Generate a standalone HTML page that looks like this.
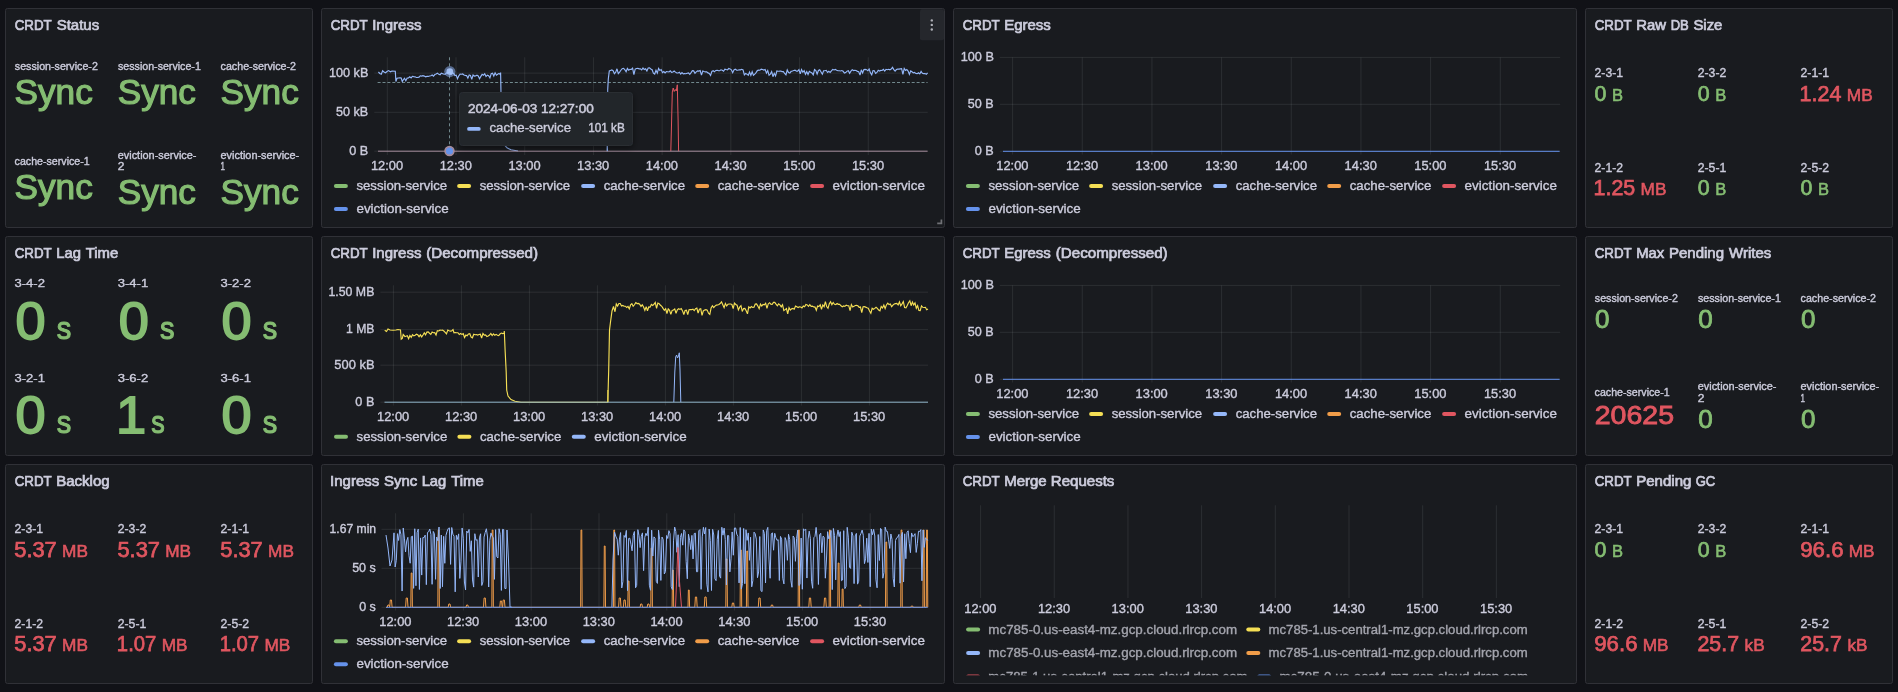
<!DOCTYPE html>
<html><head><meta charset="utf-8"><title>CRDT Dashboard</title>
<style>html,body{margin:0;padding:0;background:#111217;width:1898px;height:692px;overflow:hidden}
svg text{font-family:"Liberation Sans",sans-serif}</style></head>
<body>
<svg width="1898" height="692" viewBox="0 0 1898 692" style="display:block;will-change:transform">
<defs><filter id="sh" x="-20%" y="-20%" width="140%" height="150%"><feDropShadow dx="0" dy="2" stdDeviation="3" flood-color="#000" flood-opacity="0.5"/></filter></defs>
<rect width="1898" height="692" fill="#111217"/>
<rect x="5.5" y="8.5" width="307" height="219" rx="2" fill="#191b1f" stroke="#303137" stroke-width="1"/>
<rect x="321.5" y="8.5" width="623" height="219" rx="2" fill="#191b1f" stroke="#303137" stroke-width="1"/>
<rect x="953.5" y="8.5" width="623" height="219" rx="2" fill="#191b1f" stroke="#303137" stroke-width="1"/>
<rect x="1585.5" y="8.5" width="307" height="219" rx="2" fill="#191b1f" stroke="#303137" stroke-width="1"/>
<rect x="5.5" y="236.5" width="307" height="219" rx="2" fill="#191b1f" stroke="#303137" stroke-width="1"/>
<rect x="321.5" y="236.5" width="623" height="219" rx="2" fill="#191b1f" stroke="#303137" stroke-width="1"/>
<rect x="953.5" y="236.5" width="623" height="219" rx="2" fill="#191b1f" stroke="#303137" stroke-width="1"/>
<rect x="1585.5" y="236.5" width="307" height="219" rx="2" fill="#191b1f" stroke="#303137" stroke-width="1"/>
<rect x="5.5" y="464.5" width="307" height="219" rx="2" fill="#191b1f" stroke="#303137" stroke-width="1"/>
<rect x="321.5" y="464.5" width="623" height="219" rx="2" fill="#191b1f" stroke="#303137" stroke-width="1"/>
<rect x="953.5" y="464.5" width="623" height="219" rx="2" fill="#191b1f" stroke="#303137" stroke-width="1"/>
<rect x="1585.5" y="464.5" width="307" height="219" rx="2" fill="#191b1f" stroke="#303137" stroke-width="1"/>
<g font-family="Liberation Sans, sans-serif">
<text x="14.70" y="29.70" font-size="14.3" fill="#ccccdc" textLength="37.00" lengthAdjust="spacingAndGlyphs" stroke="#ccccdc" stroke-width="0.70">CRDT</text>
<text x="56.73" y="29.70" font-size="14.3" fill="#ccccdc" textLength="42.45" lengthAdjust="spacingAndGlyphs" stroke="#ccccdc" stroke-width="0.70">Status</text>
<text x="330.70" y="29.70" font-size="14.3" fill="#ccccdc" textLength="37.00" lengthAdjust="spacingAndGlyphs" stroke="#ccccdc" stroke-width="0.70">CRDT</text>
<text x="372.20" y="29.70" font-size="14.3" fill="#ccccdc" textLength="49.21" lengthAdjust="spacingAndGlyphs" stroke="#ccccdc" stroke-width="0.70">Ingress</text>
<text x="962.70" y="29.70" font-size="14.3" fill="#ccccdc" textLength="37.00" lengthAdjust="spacingAndGlyphs" stroke="#ccccdc" stroke-width="0.70">CRDT</text>
<text x="1004.20" y="29.70" font-size="14.3" fill="#ccccdc" textLength="46.67" lengthAdjust="spacingAndGlyphs" stroke="#ccccdc" stroke-width="0.70">Egress</text>
<text x="1594.70" y="29.70" font-size="14.3" fill="#ccccdc" textLength="37.00" lengthAdjust="spacingAndGlyphs" stroke="#ccccdc" stroke-width="0.70">CRDT</text>
<text x="1636.22" y="29.70" font-size="14.3" fill="#ccccdc" textLength="29.73" lengthAdjust="spacingAndGlyphs" stroke="#ccccdc" stroke-width="0.70">Raw</text>
<text x="1670.69" y="29.70" font-size="14.3" fill="#ccccdc" textLength="18.09" lengthAdjust="spacingAndGlyphs" stroke="#ccccdc" stroke-width="0.70">DB</text>
<text x="1693.46" y="29.70" font-size="14.3" fill="#ccccdc" textLength="28.89" lengthAdjust="spacingAndGlyphs" stroke="#ccccdc" stroke-width="0.70">Size</text>
<text x="14.70" y="257.70" font-size="14.3" fill="#ccccdc" textLength="37.00" lengthAdjust="spacingAndGlyphs" stroke="#ccccdc" stroke-width="0.70">CRDT</text>
<text x="56.22" y="257.70" font-size="14.3" fill="#ccccdc" textLength="24.64" lengthAdjust="spacingAndGlyphs" stroke="#ccccdc" stroke-width="0.70">Lag</text>
<text x="85.72" y="257.70" font-size="14.3" fill="#ccccdc" textLength="32.55" lengthAdjust="spacingAndGlyphs" stroke="#ccccdc" stroke-width="0.70">Time</text>
<text x="330.70" y="257.70" font-size="14.3" fill="#ccccdc" textLength="37.00" lengthAdjust="spacingAndGlyphs" stroke="#ccccdc" stroke-width="0.70">CRDT</text>
<text x="372.20" y="257.70" font-size="14.3" fill="#ccccdc" textLength="49.21" lengthAdjust="spacingAndGlyphs" stroke="#ccccdc" stroke-width="0.70">Ingress</text>
<text x="426.21" y="257.70" font-size="14.3" fill="#ccccdc" textLength="111.84" lengthAdjust="spacingAndGlyphs" stroke="#ccccdc" stroke-width="0.70">(Decompressed)</text>
<text x="962.70" y="257.70" font-size="14.3" fill="#ccccdc" textLength="37.00" lengthAdjust="spacingAndGlyphs" stroke="#ccccdc" stroke-width="0.70">CRDT</text>
<text x="1004.20" y="257.70" font-size="14.3" fill="#ccccdc" textLength="46.67" lengthAdjust="spacingAndGlyphs" stroke="#ccccdc" stroke-width="0.70">Egress</text>
<text x="1055.82" y="257.70" font-size="14.3" fill="#ccccdc" textLength="111.84" lengthAdjust="spacingAndGlyphs" stroke="#ccccdc" stroke-width="0.70">(Decompressed)</text>
<text x="1594.70" y="257.70" font-size="14.3" fill="#ccccdc" textLength="37.00" lengthAdjust="spacingAndGlyphs" stroke="#ccccdc" stroke-width="0.70">CRDT</text>
<text x="1636.22" y="257.70" font-size="14.3" fill="#ccccdc" textLength="28.03" lengthAdjust="spacingAndGlyphs" stroke="#ccccdc" stroke-width="0.70">Max</text>
<text x="1668.92" y="257.70" font-size="14.3" fill="#ccccdc" textLength="55.16" lengthAdjust="spacingAndGlyphs" stroke="#ccccdc" stroke-width="0.70">Pending</text>
<text x="1729.05" y="257.70" font-size="14.3" fill="#ccccdc" textLength="42.16" lengthAdjust="spacingAndGlyphs" stroke="#ccccdc" stroke-width="0.70">Writes</text>
<text x="14.70" y="485.70" font-size="14.3" fill="#ccccdc" textLength="37.00" lengthAdjust="spacingAndGlyphs" stroke="#ccccdc" stroke-width="0.70">CRDT</text>
<text x="56.20" y="485.70" font-size="14.3" fill="#ccccdc" textLength="53.44" lengthAdjust="spacingAndGlyphs" stroke="#ccccdc" stroke-width="0.70">Backlog</text>
<text x="330.09" y="485.70" font-size="14.3" fill="#ccccdc" textLength="49.21" lengthAdjust="spacingAndGlyphs" stroke="#ccccdc" stroke-width="0.70">Ingress</text>
<text x="384.11" y="485.70" font-size="14.3" fill="#ccccdc" textLength="33.13" lengthAdjust="spacingAndGlyphs" stroke="#ccccdc" stroke-width="0.70">Sync</text>
<text x="421.65" y="485.70" font-size="14.3" fill="#ccccdc" textLength="24.64" lengthAdjust="spacingAndGlyphs" stroke="#ccccdc" stroke-width="0.70">Lag</text>
<text x="451.15" y="485.70" font-size="14.3" fill="#ccccdc" textLength="32.55" lengthAdjust="spacingAndGlyphs" stroke="#ccccdc" stroke-width="0.70">Time</text>
<text x="962.70" y="485.70" font-size="14.3" fill="#ccccdc" textLength="37.00" lengthAdjust="spacingAndGlyphs" stroke="#ccccdc" stroke-width="0.70">CRDT</text>
<text x="1004.21" y="485.70" font-size="14.3" fill="#ccccdc" textLength="42.43" lengthAdjust="spacingAndGlyphs" stroke="#ccccdc" stroke-width="0.70">Merge</text>
<text x="1050.77" y="485.70" font-size="14.3" fill="#ccccdc" textLength="63.61" lengthAdjust="spacingAndGlyphs" stroke="#ccccdc" stroke-width="0.70">Requests</text>
<text x="1594.70" y="485.70" font-size="14.3" fill="#ccccdc" textLength="37.00" lengthAdjust="spacingAndGlyphs" stroke="#ccccdc" stroke-width="0.70">CRDT</text>
<text x="1636.20" y="485.70" font-size="14.3" fill="#ccccdc" textLength="55.16" lengthAdjust="spacingAndGlyphs" stroke="#ccccdc" stroke-width="0.70">Pending</text>
<text x="1695.64" y="485.70" font-size="14.3" fill="#ccccdc" textLength="19.63" lengthAdjust="spacingAndGlyphs" stroke="#ccccdc" stroke-width="0.70">GC</text>
<text x="14.83" y="70.00" font-size="10.5" fill="#ccccdc" textLength="83.00" lengthAdjust="spacingAndGlyphs" stroke="#ccccdc" stroke-width="0.36">session-service-2</text>
<text x="14.54" y="104.00" font-size="35" fill="#85bd72" textLength="78.23" lengthAdjust="spacingAndGlyphs" stroke="#85bd72" stroke-width="1.19">Sync</text>
<text x="118.03" y="70.00" font-size="10.5" fill="#ccccdc" textLength="82.79" lengthAdjust="spacingAndGlyphs" stroke="#ccccdc" stroke-width="0.36">session-service-1</text>
<text x="117.74" y="104.00" font-size="35" fill="#85bd72" textLength="78.23" lengthAdjust="spacingAndGlyphs" stroke="#85bd72" stroke-width="1.19">Sync</text>
<text x="220.57" y="70.00" font-size="10.5" fill="#ccccdc" textLength="75.47" lengthAdjust="spacingAndGlyphs" stroke="#ccccdc" stroke-width="0.36">cache-service-2</text>
<text x="220.54" y="104.00" font-size="35" fill="#85bd72" textLength="78.23" lengthAdjust="spacingAndGlyphs" stroke="#85bd72" stroke-width="1.19">Sync</text>
<text x="14.57" y="165.00" font-size="10.5" fill="#ccccdc" textLength="75.17" lengthAdjust="spacingAndGlyphs" stroke="#ccccdc" stroke-width="0.36">cache-service-1</text>
<text x="14.54" y="198.60" font-size="35" fill="#85bd72" textLength="78.23" lengthAdjust="spacingAndGlyphs" stroke="#85bd72" stroke-width="1.19">Sync</text>
<text x="117.76" y="158.90" font-size="10.5" fill="#ccccdc" textLength="78.68" lengthAdjust="spacingAndGlyphs" stroke="#ccccdc" stroke-width="0.36">eviction-service-</text>
<text x="117.71" y="169.90" font-size="10.5" fill="#ccccdc" textLength="6.69" lengthAdjust="spacingAndGlyphs" stroke="#ccccdc" stroke-width="0.36">2</text>
<text x="117.74" y="204.30" font-size="35" fill="#85bd72" textLength="78.23" lengthAdjust="spacingAndGlyphs" stroke="#85bd72" stroke-width="1.19">Sync</text>
<text x="220.56" y="158.90" font-size="10.5" fill="#ccccdc" textLength="78.68" lengthAdjust="spacingAndGlyphs" stroke="#ccccdc" stroke-width="0.36">eviction-service-</text>
<text x="220.51" y="169.90" font-size="10.5" fill="#ccccdc" textLength="4.46" lengthAdjust="spacingAndGlyphs" stroke="#ccccdc" stroke-width="0.36">1</text>
<text x="220.54" y="204.30" font-size="35" fill="#85bd72" textLength="78.23" lengthAdjust="spacingAndGlyphs" stroke="#85bd72" stroke-width="1.19">Sync</text>
<text x="14.51" y="287.10" font-size="11.5" fill="#ccccdc" textLength="30.49" lengthAdjust="spacingAndGlyphs" stroke="#ccccdc" stroke-width="0.36">3-4-2</text>
<text x="15.53" y="338.60" font-size="52.5" fill="#85bd72" textLength="30.08" lengthAdjust="spacingAndGlyphs" stroke="#85bd72" stroke-width="1.79">0</text>
<text x="56.79" y="338.60" font-size="31" fill="#85bd72" textLength="14.52" lengthAdjust="spacingAndGlyphs" stroke="#85bd72" stroke-width="1.05">s</text>
<text x="117.71" y="287.10" font-size="11.5" fill="#ccccdc" textLength="30.49" lengthAdjust="spacingAndGlyphs" stroke="#ccccdc" stroke-width="0.36">3-4-1</text>
<text x="118.73" y="338.60" font-size="52.5" fill="#85bd72" textLength="30.08" lengthAdjust="spacingAndGlyphs" stroke="#85bd72" stroke-width="1.79">0</text>
<text x="159.99" y="338.60" font-size="31" fill="#85bd72" textLength="14.52" lengthAdjust="spacingAndGlyphs" stroke="#85bd72" stroke-width="1.05">s</text>
<text x="220.51" y="287.10" font-size="11.5" fill="#ccccdc" textLength="30.49" lengthAdjust="spacingAndGlyphs" stroke="#ccccdc" stroke-width="0.36">3-2-2</text>
<text x="221.53" y="338.60" font-size="52.5" fill="#85bd72" textLength="30.08" lengthAdjust="spacingAndGlyphs" stroke="#85bd72" stroke-width="1.79">0</text>
<text x="262.79" y="338.60" font-size="31" fill="#85bd72" textLength="14.52" lengthAdjust="spacingAndGlyphs" stroke="#85bd72" stroke-width="1.05">s</text>
<text x="14.51" y="381.60" font-size="11.5" fill="#ccccdc" textLength="30.49" lengthAdjust="spacingAndGlyphs" stroke="#ccccdc" stroke-width="0.36">3-2-1</text>
<text x="15.53" y="432.80" font-size="52.5" fill="#85bd72" textLength="30.08" lengthAdjust="spacingAndGlyphs" stroke="#85bd72" stroke-width="1.79">0</text>
<text x="56.79" y="432.80" font-size="31" fill="#85bd72" textLength="14.52" lengthAdjust="spacingAndGlyphs" stroke="#85bd72" stroke-width="1.05">s</text>
<text x="117.71" y="381.60" font-size="11.5" fill="#ccccdc" textLength="30.49" lengthAdjust="spacingAndGlyphs" stroke="#ccccdc" stroke-width="0.36">3-6-2</text>
<text x="115.96" y="432.80" font-size="52.5" fill="#85bd72" textLength="30.18" lengthAdjust="spacingAndGlyphs" stroke="#85bd72" stroke-width="1.79">1</text>
<text x="151.16" y="432.80" font-size="31" fill="#85bd72" textLength="13.49" lengthAdjust="spacingAndGlyphs" stroke="#85bd72" stroke-width="1.05">s</text>
<text x="220.51" y="381.60" font-size="11.5" fill="#ccccdc" textLength="30.49" lengthAdjust="spacingAndGlyphs" stroke="#ccccdc" stroke-width="0.36">3-6-1</text>
<text x="221.53" y="432.80" font-size="52.5" fill="#85bd72" textLength="30.08" lengthAdjust="spacingAndGlyphs" stroke="#85bd72" stroke-width="1.79">0</text>
<text x="262.79" y="432.80" font-size="31" fill="#85bd72" textLength="14.52" lengthAdjust="spacingAndGlyphs" stroke="#85bd72" stroke-width="1.05">s</text>
<text x="1594.57" y="76.90" font-size="12" fill="#ccccdc" textLength="28.48" lengthAdjust="spacingAndGlyphs" stroke="#ccccdc" stroke-width="0.36">2-3-1</text>
<text x="1594.54" y="100.60" font-size="22" fill="#85bd72" textLength="11.90" lengthAdjust="spacingAndGlyphs" stroke="#85bd72" stroke-width="0.75">0</text>
<text x="1612.11" y="100.60" font-size="17.3" fill="#85bd72" textLength="11.04" lengthAdjust="spacingAndGlyphs" stroke="#85bd72" stroke-width="0.59">B</text>
<text x="1697.77" y="76.90" font-size="12" fill="#ccccdc" textLength="28.48" lengthAdjust="spacingAndGlyphs" stroke="#ccccdc" stroke-width="0.36">2-3-2</text>
<text x="1697.74" y="100.60" font-size="22" fill="#85bd72" textLength="11.90" lengthAdjust="spacingAndGlyphs" stroke="#85bd72" stroke-width="0.75">0</text>
<text x="1715.31" y="100.60" font-size="17.3" fill="#85bd72" textLength="11.04" lengthAdjust="spacingAndGlyphs" stroke="#85bd72" stroke-width="0.59">B</text>
<text x="1800.57" y="76.90" font-size="12" fill="#ccccdc" textLength="28.48" lengthAdjust="spacingAndGlyphs" stroke="#ccccdc" stroke-width="0.36">2-1-1</text>
<text x="1799.57" y="100.60" font-size="22" fill="#e05660" textLength="41.75" lengthAdjust="spacingAndGlyphs" stroke="#e05660" stroke-width="0.75">1.24</text>
<text x="1846.85" y="100.60" font-size="17.3" fill="#e05660" textLength="25.85" lengthAdjust="spacingAndGlyphs" stroke="#e05660" stroke-width="0.59">MB</text>
<text x="1594.57" y="172.00" font-size="12" fill="#ccccdc" textLength="28.48" lengthAdjust="spacingAndGlyphs" stroke="#ccccdc" stroke-width="0.36">2-1-2</text>
<text x="1593.57" y="194.90" font-size="22" fill="#e05660" textLength="41.69" lengthAdjust="spacingAndGlyphs" stroke="#e05660" stroke-width="0.75">1.25</text>
<text x="1640.55" y="194.90" font-size="17.3" fill="#e05660" textLength="25.85" lengthAdjust="spacingAndGlyphs" stroke="#e05660" stroke-width="0.59">MB</text>
<text x="1697.77" y="172.00" font-size="12" fill="#ccccdc" textLength="28.48" lengthAdjust="spacingAndGlyphs" stroke="#ccccdc" stroke-width="0.36">2-5-1</text>
<text x="1697.74" y="194.90" font-size="22" fill="#85bd72" textLength="11.90" lengthAdjust="spacingAndGlyphs" stroke="#85bd72" stroke-width="0.75">0</text>
<text x="1715.31" y="194.90" font-size="17.3" fill="#85bd72" textLength="11.04" lengthAdjust="spacingAndGlyphs" stroke="#85bd72" stroke-width="0.59">B</text>
<text x="1800.57" y="172.00" font-size="12" fill="#ccccdc" textLength="28.48" lengthAdjust="spacingAndGlyphs" stroke="#ccccdc" stroke-width="0.36">2-5-2</text>
<text x="1800.54" y="194.90" font-size="22" fill="#85bd72" textLength="11.90" lengthAdjust="spacingAndGlyphs" stroke="#85bd72" stroke-width="0.75">0</text>
<text x="1818.11" y="194.90" font-size="17.3" fill="#85bd72" textLength="11.04" lengthAdjust="spacingAndGlyphs" stroke="#85bd72" stroke-width="0.59">B</text>
<text x="14.57" y="532.90" font-size="12" fill="#ccccdc" textLength="28.48" lengthAdjust="spacingAndGlyphs" stroke="#ccccdc" stroke-width="0.36">2-3-1</text>
<text x="14.28" y="556.60" font-size="22" fill="#e05660" textLength="42.50" lengthAdjust="spacingAndGlyphs" stroke="#e05660" stroke-width="0.75">5.37</text>
<text x="62.05" y="556.60" font-size="17.3" fill="#e05660" textLength="25.85" lengthAdjust="spacingAndGlyphs" stroke="#e05660" stroke-width="0.59">MB</text>
<text x="117.77" y="532.90" font-size="12" fill="#ccccdc" textLength="28.48" lengthAdjust="spacingAndGlyphs" stroke="#ccccdc" stroke-width="0.36">2-3-2</text>
<text x="117.48" y="556.60" font-size="22" fill="#e05660" textLength="42.50" lengthAdjust="spacingAndGlyphs" stroke="#e05660" stroke-width="0.75">5.37</text>
<text x="165.25" y="556.60" font-size="17.3" fill="#e05660" textLength="25.85" lengthAdjust="spacingAndGlyphs" stroke="#e05660" stroke-width="0.59">MB</text>
<text x="220.57" y="532.90" font-size="12" fill="#ccccdc" textLength="28.48" lengthAdjust="spacingAndGlyphs" stroke="#ccccdc" stroke-width="0.36">2-1-1</text>
<text x="220.28" y="556.60" font-size="22" fill="#e05660" textLength="42.50" lengthAdjust="spacingAndGlyphs" stroke="#e05660" stroke-width="0.75">5.37</text>
<text x="268.05" y="556.60" font-size="17.3" fill="#e05660" textLength="25.85" lengthAdjust="spacingAndGlyphs" stroke="#e05660" stroke-width="0.59">MB</text>
<text x="14.57" y="628.00" font-size="12" fill="#ccccdc" textLength="28.48" lengthAdjust="spacingAndGlyphs" stroke="#ccccdc" stroke-width="0.36">2-1-2</text>
<text x="14.28" y="650.90" font-size="22" fill="#e05660" textLength="42.50" lengthAdjust="spacingAndGlyphs" stroke="#e05660" stroke-width="0.75">5.37</text>
<text x="62.05" y="650.90" font-size="17.3" fill="#e05660" textLength="25.85" lengthAdjust="spacingAndGlyphs" stroke="#e05660" stroke-width="0.59">MB</text>
<text x="117.77" y="628.00" font-size="12" fill="#ccccdc" textLength="28.48" lengthAdjust="spacingAndGlyphs" stroke="#ccccdc" stroke-width="0.36">2-5-1</text>
<text x="116.86" y="650.90" font-size="22" fill="#e05660" textLength="39.45" lengthAdjust="spacingAndGlyphs" stroke="#e05660" stroke-width="0.75">1.07</text>
<text x="161.65" y="650.90" font-size="17.3" fill="#e05660" textLength="25.85" lengthAdjust="spacingAndGlyphs" stroke="#e05660" stroke-width="0.59">MB</text>
<text x="220.57" y="628.00" font-size="12" fill="#ccccdc" textLength="28.48" lengthAdjust="spacingAndGlyphs" stroke="#ccccdc" stroke-width="0.36">2-5-2</text>
<text x="219.66" y="650.90" font-size="22" fill="#e05660" textLength="39.45" lengthAdjust="spacingAndGlyphs" stroke="#e05660" stroke-width="0.75">1.07</text>
<text x="264.45" y="650.90" font-size="17.3" fill="#e05660" textLength="25.85" lengthAdjust="spacingAndGlyphs" stroke="#e05660" stroke-width="0.59">MB</text>
<text x="1594.57" y="532.90" font-size="12" fill="#ccccdc" textLength="28.48" lengthAdjust="spacingAndGlyphs" stroke="#ccccdc" stroke-width="0.36">2-3-1</text>
<text x="1594.54" y="556.60" font-size="22" fill="#85bd72" textLength="11.90" lengthAdjust="spacingAndGlyphs" stroke="#85bd72" stroke-width="0.75">0</text>
<text x="1612.11" y="556.60" font-size="17.3" fill="#85bd72" textLength="11.04" lengthAdjust="spacingAndGlyphs" stroke="#85bd72" stroke-width="0.59">B</text>
<text x="1697.77" y="532.90" font-size="12" fill="#ccccdc" textLength="28.48" lengthAdjust="spacingAndGlyphs" stroke="#ccccdc" stroke-width="0.36">2-3-2</text>
<text x="1697.74" y="556.60" font-size="22" fill="#85bd72" textLength="11.90" lengthAdjust="spacingAndGlyphs" stroke="#85bd72" stroke-width="0.75">0</text>
<text x="1715.31" y="556.60" font-size="17.3" fill="#85bd72" textLength="11.04" lengthAdjust="spacingAndGlyphs" stroke="#85bd72" stroke-width="0.59">B</text>
<text x="1800.57" y="532.90" font-size="12" fill="#ccccdc" textLength="28.48" lengthAdjust="spacingAndGlyphs" stroke="#ccccdc" stroke-width="0.36">2-1-1</text>
<text x="1800.26" y="556.60" font-size="22" fill="#e05660" textLength="43.24" lengthAdjust="spacingAndGlyphs" stroke="#e05660" stroke-width="0.75">96.6</text>
<text x="1848.75" y="556.60" font-size="17.3" fill="#e05660" textLength="25.85" lengthAdjust="spacingAndGlyphs" stroke="#e05660" stroke-width="0.59">MB</text>
<text x="1594.57" y="628.00" font-size="12" fill="#ccccdc" textLength="28.48" lengthAdjust="spacingAndGlyphs" stroke="#ccccdc" stroke-width="0.36">2-1-2</text>
<text x="1594.26" y="650.90" font-size="22" fill="#e05660" textLength="43.24" lengthAdjust="spacingAndGlyphs" stroke="#e05660" stroke-width="0.75">96.6</text>
<text x="1642.75" y="650.90" font-size="17.3" fill="#e05660" textLength="25.85" lengthAdjust="spacingAndGlyphs" stroke="#e05660" stroke-width="0.59">MB</text>
<text x="1697.77" y="628.00" font-size="12" fill="#ccccdc" textLength="28.48" lengthAdjust="spacingAndGlyphs" stroke="#ccccdc" stroke-width="0.36">2-5-1</text>
<text x="1697.50" y="650.90" font-size="22" fill="#e05660" textLength="41.56" lengthAdjust="spacingAndGlyphs" stroke="#e05660" stroke-width="0.75">25.7</text>
<text x="1744.60" y="650.90" font-size="17.3" fill="#e05660" textLength="20.08" lengthAdjust="spacingAndGlyphs" stroke="#e05660" stroke-width="0.59">kB</text>
<text x="1800.57" y="628.00" font-size="12" fill="#ccccdc" textLength="28.48" lengthAdjust="spacingAndGlyphs" stroke="#ccccdc" stroke-width="0.36">2-5-2</text>
<text x="1800.30" y="650.90" font-size="22" fill="#e05660" textLength="41.56" lengthAdjust="spacingAndGlyphs" stroke="#e05660" stroke-width="0.75">25.7</text>
<text x="1847.40" y="650.90" font-size="17.3" fill="#e05660" textLength="20.08" lengthAdjust="spacingAndGlyphs" stroke="#e05660" stroke-width="0.59">kB</text>
<text x="1594.83" y="302.40" font-size="10.5" fill="#ccccdc" textLength="83.00" lengthAdjust="spacingAndGlyphs" stroke="#ccccdc" stroke-width="0.36">session-service-2</text>
<text x="1595.04" y="328.40" font-size="26" fill="#85bd72" textLength="14.48" lengthAdjust="spacingAndGlyphs" stroke="#85bd72" stroke-width="0.88">0</text>
<text x="1698.03" y="302.40" font-size="10.5" fill="#ccccdc" textLength="82.79" lengthAdjust="spacingAndGlyphs" stroke="#ccccdc" stroke-width="0.36">session-service-1</text>
<text x="1698.24" y="328.40" font-size="26" fill="#85bd72" textLength="14.48" lengthAdjust="spacingAndGlyphs" stroke="#85bd72" stroke-width="0.88">0</text>
<text x="1800.57" y="302.40" font-size="10.5" fill="#ccccdc" textLength="75.47" lengthAdjust="spacingAndGlyphs" stroke="#ccccdc" stroke-width="0.36">cache-service-2</text>
<text x="1801.04" y="328.40" font-size="26" fill="#85bd72" textLength="14.48" lengthAdjust="spacingAndGlyphs" stroke="#85bd72" stroke-width="0.88">0</text>
<text x="1594.57" y="396.30" font-size="10.5" fill="#ccccdc" textLength="75.17" lengthAdjust="spacingAndGlyphs" stroke="#ccccdc" stroke-width="0.36">cache-service-1</text>
<text x="1594.77" y="423.50" font-size="26" fill="#e05660" textLength="79.24" lengthAdjust="spacingAndGlyphs" stroke="#e05660" stroke-width="0.88">20625</text>
<text x="1697.76" y="390.30" font-size="10.5" fill="#ccccdc" textLength="78.68" lengthAdjust="spacingAndGlyphs" stroke="#ccccdc" stroke-width="0.36">eviction-service-</text>
<text x="1697.71" y="402.00" font-size="10.5" fill="#ccccdc" textLength="6.69" lengthAdjust="spacingAndGlyphs" stroke="#ccccdc" stroke-width="0.36">2</text>
<text x="1698.24" y="428.20" font-size="26" fill="#85bd72" textLength="14.48" lengthAdjust="spacingAndGlyphs" stroke="#85bd72" stroke-width="0.88">0</text>
<text x="1800.56" y="390.30" font-size="10.5" fill="#ccccdc" textLength="78.68" lengthAdjust="spacingAndGlyphs" stroke="#ccccdc" stroke-width="0.36">eviction-service-</text>
<text x="1800.51" y="402.00" font-size="10.5" fill="#ccccdc" textLength="4.46" lengthAdjust="spacingAndGlyphs" stroke="#ccccdc" stroke-width="0.36">1</text>
<text x="1801.04" y="428.20" font-size="26" fill="#85bd72" textLength="14.48" lengthAdjust="spacingAndGlyphs" stroke="#85bd72" stroke-width="0.88">0</text>
<line x1="374.30" y1="73.10" x2="927.70" y2="73.10" stroke="rgba(204,210,210,0.11)" stroke-width="1"/>
<line x1="374.30" y1="112.30" x2="927.70" y2="112.30" stroke="rgba(204,210,210,0.11)" stroke-width="1"/>
<line x1="374.30" y1="151.20" x2="927.70" y2="151.20" stroke="rgba(204,210,210,0.11)" stroke-width="1"/>
<line x1="387.30" y1="57.30" x2="387.30" y2="155.00" stroke="rgba(204,210,210,0.11)" stroke-width="1"/>
<line x1="456.01" y1="57.30" x2="456.01" y2="155.00" stroke="rgba(204,210,210,0.11)" stroke-width="1"/>
<line x1="524.72" y1="57.30" x2="524.72" y2="155.00" stroke="rgba(204,210,210,0.11)" stroke-width="1"/>
<line x1="593.43" y1="57.30" x2="593.43" y2="155.00" stroke="rgba(204,210,210,0.11)" stroke-width="1"/>
<line x1="662.14" y1="57.30" x2="662.14" y2="155.00" stroke="rgba(204,210,210,0.11)" stroke-width="1"/>
<line x1="730.85" y1="57.30" x2="730.85" y2="155.00" stroke="rgba(204,210,210,0.11)" stroke-width="1"/>
<line x1="799.56" y1="57.30" x2="799.56" y2="155.00" stroke="rgba(204,210,210,0.11)" stroke-width="1"/>
<line x1="868.27" y1="57.30" x2="868.27" y2="155.00" stroke="rgba(204,210,210,0.11)" stroke-width="1"/>
<text x="328.97" y="76.80" font-size="12.5" fill="#ccccdc" textLength="39.43" lengthAdjust="spacingAndGlyphs" stroke="#ccccdc" stroke-width="0.36">100 kB</text>
<text x="335.98" y="116.00" font-size="12.5" fill="#ccccdc" textLength="32.21" lengthAdjust="spacingAndGlyphs" stroke="#ccccdc" stroke-width="0.36">50 kB</text>
<text x="349.27" y="154.90" font-size="12.5" fill="#ccccdc" textLength="18.96" lengthAdjust="spacingAndGlyphs" stroke="#ccccdc" stroke-width="0.36">0 B</text>
<text x="370.98" y="169.80" font-size="12.5" fill="#ccccdc" textLength="32.16" lengthAdjust="spacingAndGlyphs" stroke="#ccccdc" stroke-width="0.36">12:00</text>
<text x="439.69" y="169.80" font-size="12.5" fill="#ccccdc" textLength="32.16" lengthAdjust="spacingAndGlyphs" stroke="#ccccdc" stroke-width="0.36">12:30</text>
<text x="508.40" y="169.80" font-size="12.5" fill="#ccccdc" textLength="32.16" lengthAdjust="spacingAndGlyphs" stroke="#ccccdc" stroke-width="0.36">13:00</text>
<text x="577.11" y="169.80" font-size="12.5" fill="#ccccdc" textLength="32.16" lengthAdjust="spacingAndGlyphs" stroke="#ccccdc" stroke-width="0.36">13:30</text>
<text x="645.82" y="169.80" font-size="12.5" fill="#ccccdc" textLength="32.16" lengthAdjust="spacingAndGlyphs" stroke="#ccccdc" stroke-width="0.36">14:00</text>
<text x="714.53" y="169.80" font-size="12.5" fill="#ccccdc" textLength="32.16" lengthAdjust="spacingAndGlyphs" stroke="#ccccdc" stroke-width="0.36">14:30</text>
<text x="783.24" y="169.80" font-size="12.5" fill="#ccccdc" textLength="32.16" lengthAdjust="spacingAndGlyphs" stroke="#ccccdc" stroke-width="0.36">15:00</text>
<text x="851.95" y="169.80" font-size="12.5" fill="#ccccdc" textLength="32.16" lengthAdjust="spacingAndGlyphs" stroke="#ccccdc" stroke-width="0.36">15:30</text>
<line x1="377.60" y1="82.50" x2="927.60" y2="82.50" stroke="#71888d" stroke-width="1" stroke-dasharray="3 1.9"/>
<polyline points="378.40,72.00 379.80,73.50 381.30,74.20 382.60,70.80 384.00,72.00 385.50,72.80 387.00,71.50 388.50,70.60 390.50,71.80 392.00,71.00 395.30,71.20 395.90,81.50 397.00,78.20 400.00,77.80 401.20,78.00 402.30,81.60 403.50,79.50 404.50,78.29 405.82,80.69 407.14,78.06 408.45,78.00 409.77,76.76 411.09,77.94 412.41,76.28 413.73,76.59 415.05,76.85 416.36,77.47 417.68,77.35 419.00,77.17 420.32,75.77 421.64,76.04 422.95,75.60 424.27,76.10 425.59,76.84 426.91,76.40 428.23,76.42 429.55,75.94 430.86,75.75 432.18,75.05 433.50,76.12 434.82,74.56 436.14,74.09 437.45,73.16 438.77,74.33 440.09,74.73 441.41,73.10 442.73,73.68 444.05,74.25 445.36,74.20 446.68,72.89 448.00,73.03 449.80,71.80 451.00,74.44 452.30,73.00 453.59,73.32 454.89,75.54 456.19,75.12 457.49,78.66 458.78,75.83 460.08,74.04 461.38,74.24 462.68,73.94 463.97,74.95 465.27,75.39 466.57,75.59 467.87,78.11 469.16,75.04 470.46,75.55 471.76,79.44 473.06,75.06 474.35,76.04 475.65,75.94 476.95,75.27 478.24,75.98 479.54,78.82 480.84,76.36 482.14,74.37 483.43,75.25 484.73,73.84 486.03,76.58 487.33,75.19 488.62,75.78 489.92,77.88 491.22,73.70 492.52,73.18 493.81,76.02 495.11,72.84 496.41,75.20 497.71,74.19 499.00,73.38 500.30,74.63 500.60,72.50 501.30,110.00 502.50,138.00 504.50,145.00 507.00,147.80 511.00,149.80 518.00,151.00" fill="none" stroke="#94b7f9" stroke-width="1.15"  stroke-linejoin="miter" stroke-miterlimit="3"/>
<polyline points="607.20,151.50 607.70,90.00 608.30,79.00 609.30,71.00 610.50,70.50 611.80,69.98 613.10,70.66 614.40,73.76 615.70,72.20 617.00,68.83 618.30,73.63 619.60,72.13 620.90,70.23 622.20,68.73 623.50,68.30 624.80,69.66 626.10,71.72 627.39,68.42 628.69,70.17 629.99,69.38 631.29,69.46 632.59,68.23 633.89,74.51 635.19,69.07 636.49,68.44 637.79,68.25 639.09,68.89 640.39,68.90 641.69,69.85 642.99,68.02 644.29,69.58 645.59,68.86 646.89,70.93 648.19,67.94 649.49,67.76 650.79,68.95 652.09,69.68 653.39,73.19 654.69,74.03 655.99,70.36 657.29,73.10 658.58,68.39 659.88,70.53 661.18,69.59 662.48,72.67 663.78,71.54 665.08,72.97 666.38,71.54 667.68,71.76 668.98,71.99 670.28,70.82 671.58,72.45 672.88,72.04 674.18,70.97 675.48,72.13 676.78,72.95 678.08,72.96 679.38,72.21 680.68,74.05 681.98,72.56 683.28,73.86 684.58,73.57 685.88,73.72 687.18,73.24 688.48,72.89 689.77,74.32 691.07,72.62 692.37,70.73 693.67,70.90 694.97,73.34 696.27,71.81 697.57,70.81 698.87,71.05 700.17,70.50 701.47,75.17 702.77,70.96 704.07,71.50 705.37,71.85 706.67,71.73 707.97,72.89 709.27,73.47 710.57,75.50 711.87,71.37 713.17,70.71 714.47,71.78 715.77,70.42 717.07,70.23 718.37,70.61 719.67,70.76 720.97,69.82 722.26,70.34 723.56,71.22 724.86,69.08 726.16,69.49 727.46,69.83 728.76,68.52 730.06,68.90 731.36,69.82 732.66,72.67 733.96,69.94 735.26,69.11 736.56,70.08 737.86,70.25 739.16,69.82 740.46,69.86 741.76,69.29 743.06,69.95 744.36,74.85 745.66,73.53 746.96,74.13 748.26,75.25 749.56,72.02 750.86,75.36 752.16,71.77 753.45,75.33 754.75,74.04 756.05,72.61 757.35,70.59 758.65,70.11 759.95,70.25 761.25,69.16 762.55,69.43 763.85,70.10 765.15,69.52 766.45,73.13 767.75,70.53 769.05,75.29 770.35,74.07 771.65,71.55 772.95,76.73 774.25,73.35 775.55,75.90 776.85,71.02 778.15,71.25 779.45,71.17 780.75,71.01 782.05,71.61 783.35,71.62 784.65,73.46 785.94,74.92 787.24,69.98 788.54,72.58 789.84,73.13 791.14,71.33 792.44,71.01 793.74,70.56 795.04,70.13 796.34,71.13 797.64,71.08 798.94,69.69 800.24,73.80 801.54,69.61 802.84,72.25 804.14,70.57 805.44,74.26 806.74,71.64 808.04,74.55 809.34,71.38 810.64,72.15 811.94,72.89 813.24,74.91 814.54,69.54 815.84,70.54 817.13,74.01 818.43,70.50 819.73,69.80 821.03,72.05 822.33,74.19 823.63,70.73 824.93,70.70 826.23,70.31 827.53,72.46 828.83,71.30 830.13,72.38 831.43,70.80 832.73,69.41 834.03,69.97 835.33,69.36 836.63,70.25 837.93,70.73 839.23,70.77 840.53,70.96 841.83,70.56 843.13,71.29 844.43,73.07 845.73,72.59 847.03,71.18 848.33,70.69 849.62,73.32 850.92,71.18 852.22,69.72 853.52,70.59 854.82,70.27 856.12,70.52 857.42,71.42 858.72,71.72 860.02,75.12 861.32,69.79 862.62,72.99 863.92,69.60 865.22,69.40 866.52,69.67 867.82,70.78 869.12,69.05 870.42,72.87 871.72,74.90 873.02,70.56 874.32,70.67 875.62,73.43 876.92,72.45 878.22,70.20 879.52,71.02 880.81,70.43 882.11,70.48 883.41,69.39 884.71,71.06 886.01,69.32 887.31,69.73 888.61,69.30 889.91,69.78 891.21,69.09 892.51,67.37 893.81,69.59 895.11,71.16 896.41,69.54 897.71,69.11 899.01,69.18 900.31,68.90 901.61,68.74 902.91,74.31 904.21,68.53 905.51,70.43 906.81,69.44 908.11,71.12 909.41,74.33 910.71,70.90 912.00,71.73 913.30,72.83 914.60,72.40 915.90,73.56 917.20,73.69 918.50,72.82 919.80,73.90 921.10,71.39 922.40,73.24 923.70,73.62 925.00,73.61 926.30,74.27 927.60,72.80" fill="none" stroke="#94b7f9" stroke-width="1.15"  stroke-linejoin="miter" stroke-miterlimit="3"/>
<polyline points="670.80,151.20 671.50,125.00 672.30,92.00 673.20,88.00 674.20,91.50 675.30,89.50 676.30,91.00 677.30,84.80 678.10,120.00 678.60,151.20" fill="none" stroke="#e05660" stroke-width="1"  stroke-linejoin="miter" stroke-miterlimit="3"/>
<line x1="378.00" y1="151.20" x2="927.60" y2="151.20" stroke="#a48b9b" stroke-width="1.0"/>
<line x1="607.40" y1="151.00" x2="607.40" y2="140.00" stroke="#94b7f9" stroke-width="1"/>
<line x1="449.50" y1="57.30" x2="449.50" y2="151.00" stroke="#71888d" stroke-width="1" stroke-dasharray="3 3"/>
<circle cx="449.8" cy="71.6" r="5.6" fill="#94b7f9" fill-opacity="0.5"/>
<circle cx="449.8" cy="71.6" r="3.3" fill="#a9c6fb" fill-opacity="0.9"/>
<circle cx="449.5" cy="151" r="4.4" fill="#6592eb" stroke="#a48b9b" stroke-width="1.7"/>
<rect x="333.90" y="184.00" width="14" height="4" rx="2" fill="#85bd72"/>
<text x="356.45" y="190.10" font-size="12.5" fill="#ccccdc" textLength="90.69" lengthAdjust="spacingAndGlyphs" stroke="#ccccdc" stroke-width="0.36">session-service</text>
<rect x="457.10" y="184.00" width="14" height="4" rx="2" fill="#f5df55"/>
<text x="479.65" y="190.10" font-size="12.5" fill="#ccccdc" textLength="90.48" lengthAdjust="spacingAndGlyphs" stroke="#ccccdc" stroke-width="0.36">session-service</text>
<rect x="581.10" y="184.00" width="14" height="4" rx="2" fill="#94b7f9"/>
<text x="603.65" y="190.10" font-size="12.5" fill="#ccccdc" textLength="81.36" lengthAdjust="spacingAndGlyphs" stroke="#ccccdc" stroke-width="0.36">cache-service</text>
<rect x="695.20" y="184.00" width="14" height="4" rx="2" fill="#f19d49"/>
<text x="717.75" y="190.10" font-size="12.5" fill="#ccccdc" textLength="81.56" lengthAdjust="spacingAndGlyphs" stroke="#ccccdc" stroke-width="0.36">cache-service</text>
<rect x="810.10" y="184.00" width="14" height="4" rx="2" fill="#e05660"/>
<text x="832.64" y="190.10" font-size="12.5" fill="#ccccdc" textLength="92.30" lengthAdjust="spacingAndGlyphs" stroke="#ccccdc" stroke-width="0.36">eviction-service</text>
<rect x="333.90" y="207.00" width="14" height="4" rx="2" fill="#6592eb"/>
<text x="356.44" y="213.10" font-size="12.5" fill="#ccccdc" textLength="92.30" lengthAdjust="spacingAndGlyphs" stroke="#ccccdc" stroke-width="0.36">eviction-service</text>
<rect x="459.5" y="92.5" width="173" height="53" rx="3" fill="#22252b" stroke="#2a2d33" stroke-width="1" filter="url(#sh)"/>
<text x="467.91" y="112.60" font-size="12.5" fill="#ccccdc" textLength="125.81" lengthAdjust="spacingAndGlyphs" stroke="#ccccdc" stroke-width="0.50">2024-06-03 12:27:00</text>
<rect x="467.1" y="127" width="13.6" height="3.8" rx="1.9" fill="#94b7f9"/>
<text x="489.45" y="131.50" font-size="12.5" fill="#ccccdc" textLength="81.56" lengthAdjust="spacingAndGlyphs" stroke="#ccccdc" stroke-width="0.36">cache-service</text>
<text x="588.16" y="131.50" font-size="12.5" fill="#ccccdc" textLength="36.57" lengthAdjust="spacingAndGlyphs" stroke="#ccccdc" stroke-width="0.40">101 kB</text>
<rect x="920" y="9.3" width="24" height="31" rx="2" fill="#25272c"/>
<circle cx="931.8" cy="20.4" r="1.2" fill="#b0b1b9"/>
<circle cx="931.8" cy="24.9" r="1.2" fill="#b0b1b9"/>
<circle cx="931.8" cy="29.5" r="1.2" fill="#b0b1b9"/>
<path d="M937.2 223.4 H941.4 V219.6" fill="none" stroke="#6f7075" stroke-width="1.7"/>
<line x1="999.80" y1="57.40" x2="1560.20" y2="57.40" stroke="rgba(204,210,210,0.11)" stroke-width="1"/>
<line x1="999.80" y1="104.30" x2="1560.20" y2="104.30" stroke="rgba(204,210,210,0.11)" stroke-width="1"/>
<line x1="999.80" y1="151.30" x2="1560.20" y2="151.30" stroke="rgba(204,210,210,0.11)" stroke-width="1"/>
<line x1="1012.60" y1="57.40" x2="1012.60" y2="154.50" stroke="rgba(204,210,210,0.11)" stroke-width="1"/>
<line x1="1082.27" y1="57.40" x2="1082.27" y2="154.50" stroke="rgba(204,210,210,0.11)" stroke-width="1"/>
<line x1="1151.94" y1="57.40" x2="1151.94" y2="154.50" stroke="rgba(204,210,210,0.11)" stroke-width="1"/>
<line x1="1221.61" y1="57.40" x2="1221.61" y2="154.50" stroke="rgba(204,210,210,0.11)" stroke-width="1"/>
<line x1="1291.28" y1="57.40" x2="1291.28" y2="154.50" stroke="rgba(204,210,210,0.11)" stroke-width="1"/>
<line x1="1360.95" y1="57.40" x2="1360.95" y2="154.50" stroke="rgba(204,210,210,0.11)" stroke-width="1"/>
<line x1="1430.62" y1="57.40" x2="1430.62" y2="154.50" stroke="rgba(204,210,210,0.11)" stroke-width="1"/>
<line x1="1500.29" y1="57.40" x2="1500.29" y2="154.50" stroke="rgba(204,210,210,0.11)" stroke-width="1"/>
<text x="960.77" y="61.10" font-size="12.5" fill="#ccccdc" textLength="33.13" lengthAdjust="spacingAndGlyphs" stroke="#ccccdc" stroke-width="0.36">100 B</text>
<text x="967.88" y="108.00" font-size="12.5" fill="#ccccdc" textLength="25.81" lengthAdjust="spacingAndGlyphs" stroke="#ccccdc" stroke-width="0.36">50 B</text>
<text x="974.77" y="155.00" font-size="12.5" fill="#ccccdc" textLength="18.96" lengthAdjust="spacingAndGlyphs" stroke="#ccccdc" stroke-width="0.36">0 B</text>
<text x="996.28" y="170.20" font-size="12.5" fill="#ccccdc" textLength="32.16" lengthAdjust="spacingAndGlyphs" stroke="#ccccdc" stroke-width="0.36">12:00</text>
<text x="1065.95" y="170.20" font-size="12.5" fill="#ccccdc" textLength="32.16" lengthAdjust="spacingAndGlyphs" stroke="#ccccdc" stroke-width="0.36">12:30</text>
<text x="1135.62" y="170.20" font-size="12.5" fill="#ccccdc" textLength="32.16" lengthAdjust="spacingAndGlyphs" stroke="#ccccdc" stroke-width="0.36">13:00</text>
<text x="1205.29" y="170.20" font-size="12.5" fill="#ccccdc" textLength="32.16" lengthAdjust="spacingAndGlyphs" stroke="#ccccdc" stroke-width="0.36">13:30</text>
<text x="1274.96" y="170.20" font-size="12.5" fill="#ccccdc" textLength="32.16" lengthAdjust="spacingAndGlyphs" stroke="#ccccdc" stroke-width="0.36">14:00</text>
<text x="1344.63" y="170.20" font-size="12.5" fill="#ccccdc" textLength="32.16" lengthAdjust="spacingAndGlyphs" stroke="#ccccdc" stroke-width="0.36">14:30</text>
<text x="1414.30" y="170.20" font-size="12.5" fill="#ccccdc" textLength="32.16" lengthAdjust="spacingAndGlyphs" stroke="#ccccdc" stroke-width="0.36">15:00</text>
<text x="1483.97" y="170.20" font-size="12.5" fill="#ccccdc" textLength="32.16" lengthAdjust="spacingAndGlyphs" stroke="#ccccdc" stroke-width="0.36">15:30</text>
<line x1="1003.00" y1="151.30" x2="1559.60" y2="151.30" stroke="#6592eb" stroke-width="1.0"/>
<rect x="965.90" y="184.00" width="14" height="4" rx="2" fill="#85bd72"/>
<text x="988.45" y="190.10" font-size="12.5" fill="#ccccdc" textLength="90.69" lengthAdjust="spacingAndGlyphs" stroke="#ccccdc" stroke-width="0.36">session-service</text>
<rect x="1089.10" y="184.00" width="14" height="4" rx="2" fill="#f5df55"/>
<text x="1111.65" y="190.10" font-size="12.5" fill="#ccccdc" textLength="90.48" lengthAdjust="spacingAndGlyphs" stroke="#ccccdc" stroke-width="0.36">session-service</text>
<rect x="1213.10" y="184.00" width="14" height="4" rx="2" fill="#94b7f9"/>
<text x="1235.65" y="190.10" font-size="12.5" fill="#ccccdc" textLength="81.36" lengthAdjust="spacingAndGlyphs" stroke="#ccccdc" stroke-width="0.36">cache-service</text>
<rect x="1327.20" y="184.00" width="14" height="4" rx="2" fill="#f19d49"/>
<text x="1349.75" y="190.10" font-size="12.5" fill="#ccccdc" textLength="81.56" lengthAdjust="spacingAndGlyphs" stroke="#ccccdc" stroke-width="0.36">cache-service</text>
<rect x="1442.10" y="184.00" width="14" height="4" rx="2" fill="#e05660"/>
<text x="1464.64" y="190.10" font-size="12.5" fill="#ccccdc" textLength="92.30" lengthAdjust="spacingAndGlyphs" stroke="#ccccdc" stroke-width="0.36">eviction-service</text>
<rect x="965.90" y="207.00" width="14" height="4" rx="2" fill="#6592eb"/>
<text x="988.44" y="213.10" font-size="12.5" fill="#ccccdc" textLength="92.30" lengthAdjust="spacingAndGlyphs" stroke="#ccccdc" stroke-width="0.36">eviction-service</text>
<line x1="999.80" y1="285.40" x2="1560.20" y2="285.40" stroke="rgba(204,210,210,0.11)" stroke-width="1"/>
<line x1="999.80" y1="332.30" x2="1560.20" y2="332.30" stroke="rgba(204,210,210,0.11)" stroke-width="1"/>
<line x1="999.80" y1="379.30" x2="1560.20" y2="379.30" stroke="rgba(204,210,210,0.11)" stroke-width="1"/>
<line x1="1012.60" y1="285.40" x2="1012.60" y2="382.50" stroke="rgba(204,210,210,0.11)" stroke-width="1"/>
<line x1="1082.27" y1="285.40" x2="1082.27" y2="382.50" stroke="rgba(204,210,210,0.11)" stroke-width="1"/>
<line x1="1151.94" y1="285.40" x2="1151.94" y2="382.50" stroke="rgba(204,210,210,0.11)" stroke-width="1"/>
<line x1="1221.61" y1="285.40" x2="1221.61" y2="382.50" stroke="rgba(204,210,210,0.11)" stroke-width="1"/>
<line x1="1291.28" y1="285.40" x2="1291.28" y2="382.50" stroke="rgba(204,210,210,0.11)" stroke-width="1"/>
<line x1="1360.95" y1="285.40" x2="1360.95" y2="382.50" stroke="rgba(204,210,210,0.11)" stroke-width="1"/>
<line x1="1430.62" y1="285.40" x2="1430.62" y2="382.50" stroke="rgba(204,210,210,0.11)" stroke-width="1"/>
<line x1="1500.29" y1="285.40" x2="1500.29" y2="382.50" stroke="rgba(204,210,210,0.11)" stroke-width="1"/>
<text x="960.77" y="289.10" font-size="12.5" fill="#ccccdc" textLength="33.13" lengthAdjust="spacingAndGlyphs" stroke="#ccccdc" stroke-width="0.36">100 B</text>
<text x="967.88" y="336.00" font-size="12.5" fill="#ccccdc" textLength="25.81" lengthAdjust="spacingAndGlyphs" stroke="#ccccdc" stroke-width="0.36">50 B</text>
<text x="974.77" y="383.00" font-size="12.5" fill="#ccccdc" textLength="18.96" lengthAdjust="spacingAndGlyphs" stroke="#ccccdc" stroke-width="0.36">0 B</text>
<text x="996.28" y="398.20" font-size="12.5" fill="#ccccdc" textLength="32.16" lengthAdjust="spacingAndGlyphs" stroke="#ccccdc" stroke-width="0.36">12:00</text>
<text x="1065.95" y="398.20" font-size="12.5" fill="#ccccdc" textLength="32.16" lengthAdjust="spacingAndGlyphs" stroke="#ccccdc" stroke-width="0.36">12:30</text>
<text x="1135.62" y="398.20" font-size="12.5" fill="#ccccdc" textLength="32.16" lengthAdjust="spacingAndGlyphs" stroke="#ccccdc" stroke-width="0.36">13:00</text>
<text x="1205.29" y="398.20" font-size="12.5" fill="#ccccdc" textLength="32.16" lengthAdjust="spacingAndGlyphs" stroke="#ccccdc" stroke-width="0.36">13:30</text>
<text x="1274.96" y="398.20" font-size="12.5" fill="#ccccdc" textLength="32.16" lengthAdjust="spacingAndGlyphs" stroke="#ccccdc" stroke-width="0.36">14:00</text>
<text x="1344.63" y="398.20" font-size="12.5" fill="#ccccdc" textLength="32.16" lengthAdjust="spacingAndGlyphs" stroke="#ccccdc" stroke-width="0.36">14:30</text>
<text x="1414.30" y="398.20" font-size="12.5" fill="#ccccdc" textLength="32.16" lengthAdjust="spacingAndGlyphs" stroke="#ccccdc" stroke-width="0.36">15:00</text>
<text x="1483.97" y="398.20" font-size="12.5" fill="#ccccdc" textLength="32.16" lengthAdjust="spacingAndGlyphs" stroke="#ccccdc" stroke-width="0.36">15:30</text>
<line x1="1003.00" y1="379.30" x2="1559.60" y2="379.30" stroke="#6592eb" stroke-width="1.0"/>
<rect x="965.90" y="412.00" width="14" height="4" rx="2" fill="#85bd72"/>
<text x="988.45" y="418.10" font-size="12.5" fill="#ccccdc" textLength="90.69" lengthAdjust="spacingAndGlyphs" stroke="#ccccdc" stroke-width="0.36">session-service</text>
<rect x="1089.10" y="412.00" width="14" height="4" rx="2" fill="#f5df55"/>
<text x="1111.65" y="418.10" font-size="12.5" fill="#ccccdc" textLength="90.48" lengthAdjust="spacingAndGlyphs" stroke="#ccccdc" stroke-width="0.36">session-service</text>
<rect x="1213.10" y="412.00" width="14" height="4" rx="2" fill="#94b7f9"/>
<text x="1235.65" y="418.10" font-size="12.5" fill="#ccccdc" textLength="81.36" lengthAdjust="spacingAndGlyphs" stroke="#ccccdc" stroke-width="0.36">cache-service</text>
<rect x="1327.20" y="412.00" width="14" height="4" rx="2" fill="#f19d49"/>
<text x="1349.75" y="418.10" font-size="12.5" fill="#ccccdc" textLength="81.56" lengthAdjust="spacingAndGlyphs" stroke="#ccccdc" stroke-width="0.36">cache-service</text>
<rect x="1442.10" y="412.00" width="14" height="4" rx="2" fill="#e05660"/>
<text x="1464.64" y="418.10" font-size="12.5" fill="#ccccdc" textLength="92.30" lengthAdjust="spacingAndGlyphs" stroke="#ccccdc" stroke-width="0.36">eviction-service</text>
<rect x="965.90" y="435.00" width="14" height="4" rx="2" fill="#6592eb"/>
<text x="988.44" y="441.10" font-size="12.5" fill="#ccccdc" textLength="92.30" lengthAdjust="spacingAndGlyphs" stroke="#ccccdc" stroke-width="0.36">eviction-service</text>
<line x1="380.40" y1="292.20" x2="928.00" y2="292.20" stroke="rgba(204,210,210,0.11)" stroke-width="1"/>
<line x1="380.40" y1="329.60" x2="928.00" y2="329.60" stroke="rgba(204,210,210,0.11)" stroke-width="1"/>
<line x1="380.40" y1="365.20" x2="928.00" y2="365.20" stroke="rgba(204,210,210,0.11)" stroke-width="1"/>
<line x1="380.40" y1="402.20" x2="928.00" y2="402.20" stroke="rgba(204,210,210,0.11)" stroke-width="1"/>
<line x1="393.40" y1="285.30" x2="393.40" y2="405.50" stroke="rgba(204,210,210,0.11)" stroke-width="1"/>
<line x1="461.40" y1="285.30" x2="461.40" y2="405.50" stroke="rgba(204,210,210,0.11)" stroke-width="1"/>
<line x1="529.40" y1="285.30" x2="529.40" y2="405.50" stroke="rgba(204,210,210,0.11)" stroke-width="1"/>
<line x1="597.40" y1="285.30" x2="597.40" y2="405.50" stroke="rgba(204,210,210,0.11)" stroke-width="1"/>
<line x1="665.40" y1="285.30" x2="665.40" y2="405.50" stroke="rgba(204,210,210,0.11)" stroke-width="1"/>
<line x1="733.40" y1="285.30" x2="733.40" y2="405.50" stroke="rgba(204,210,210,0.11)" stroke-width="1"/>
<line x1="801.40" y1="285.30" x2="801.40" y2="405.50" stroke="rgba(204,210,210,0.11)" stroke-width="1"/>
<line x1="869.40" y1="285.30" x2="869.40" y2="405.50" stroke="rgba(204,210,210,0.11)" stroke-width="1"/>
<text x="328.49" y="295.90" font-size="12.5" fill="#ccccdc" textLength="45.87" lengthAdjust="spacingAndGlyphs" stroke="#ccccdc" stroke-width="0.36">1.50 MB</text>
<text x="346.00" y="333.30" font-size="12.5" fill="#ccccdc" textLength="28.48" lengthAdjust="spacingAndGlyphs" stroke="#ccccdc" stroke-width="0.36">1 MB</text>
<text x="334.36" y="368.90" font-size="12.5" fill="#ccccdc" textLength="40.14" lengthAdjust="spacingAndGlyphs" stroke="#ccccdc" stroke-width="0.36">500 kB</text>
<text x="355.37" y="405.90" font-size="12.5" fill="#ccccdc" textLength="18.96" lengthAdjust="spacingAndGlyphs" stroke="#ccccdc" stroke-width="0.36">0 B</text>
<text x="377.08" y="421.00" font-size="12.5" fill="#ccccdc" textLength="32.16" lengthAdjust="spacingAndGlyphs" stroke="#ccccdc" stroke-width="0.36">12:00</text>
<text x="445.08" y="421.00" font-size="12.5" fill="#ccccdc" textLength="32.16" lengthAdjust="spacingAndGlyphs" stroke="#ccccdc" stroke-width="0.36">12:30</text>
<text x="513.08" y="421.00" font-size="12.5" fill="#ccccdc" textLength="32.16" lengthAdjust="spacingAndGlyphs" stroke="#ccccdc" stroke-width="0.36">13:00</text>
<text x="581.08" y="421.00" font-size="12.5" fill="#ccccdc" textLength="32.16" lengthAdjust="spacingAndGlyphs" stroke="#ccccdc" stroke-width="0.36">13:30</text>
<text x="649.08" y="421.00" font-size="12.5" fill="#ccccdc" textLength="32.16" lengthAdjust="spacingAndGlyphs" stroke="#ccccdc" stroke-width="0.36">14:00</text>
<text x="717.08" y="421.00" font-size="12.5" fill="#ccccdc" textLength="32.16" lengthAdjust="spacingAndGlyphs" stroke="#ccccdc" stroke-width="0.36">14:30</text>
<text x="785.08" y="421.00" font-size="12.5" fill="#ccccdc" textLength="32.16" lengthAdjust="spacingAndGlyphs" stroke="#ccccdc" stroke-width="0.36">15:00</text>
<text x="853.08" y="421.00" font-size="12.5" fill="#ccccdc" textLength="32.16" lengthAdjust="spacingAndGlyphs" stroke="#ccccdc" stroke-width="0.36">15:30</text>
<polyline points="384.70,330.30 386.50,331.50 388.00,329.00 390.00,330.00 393.00,330.20 396.00,330.00 398.00,329.50 400.50,330.00 401.20,339.20 402.30,338.50 403.20,334.50 405.00,336.50 406.00,336.31 407.31,335.68 408.61,338.83 409.92,335.51 411.22,337.33 412.53,334.64 413.83,335.84 415.14,335.30 416.44,334.28 417.75,334.84 419.06,336.65 420.36,334.82 421.67,336.86 422.97,335.03 424.28,332.86 425.58,334.82 426.89,332.11 428.19,331.96 429.50,333.23 430.81,334.43 432.11,332.00 433.42,332.72 434.72,332.63 436.03,335.00 437.33,330.64 438.64,330.95 439.94,330.19 441.25,330.24 442.56,330.16 443.86,331.06 445.17,332.36 446.47,333.88 447.78,330.03 449.08,330.78 450.39,331.05 451.69,330.84 453.00,329.60 454.00,332.79 455.32,332.51 456.63,332.79 457.95,332.78 459.26,334.54 460.58,333.51 461.89,334.39 463.21,333.66 464.53,337.52 465.84,335.11 467.16,335.69 468.47,334.01 469.79,333.76 471.11,337.10 472.42,337.82 473.74,334.23 475.05,334.72 476.37,334.56 477.68,335.07 479.00,334.47 480.32,334.25 481.63,338.04 482.95,333.55 484.26,335.22 485.58,334.92 486.89,336.61 488.21,335.94 489.53,335.10 490.84,333.40 492.16,335.52 493.47,333.92 494.79,335.30 496.11,334.35 497.42,335.29 498.74,335.65 500.05,333.92 501.37,333.04 502.68,333.55 504.00,333.25 504.30,331.00 505.20,352.00 506.20,372.00 506.70,390.00 508.00,396.00 511.00,399.50 515.00,401.30 521.00,402.20 607.80,402.20 608.70,370.00 609.50,330.00 610.50,322.00 612.00,311.00 613.50,306.50 615.00,311.72 616.30,303.93 617.60,305.98 618.90,303.48 620.20,303.49 621.49,306.04 622.79,305.39 624.09,306.20 625.39,306.20 626.69,307.41 627.99,306.41 629.29,308.84 630.59,304.91 631.88,303.64 633.18,306.26 634.48,304.77 635.78,302.64 637.08,303.57 638.38,303.44 639.68,304.24 640.98,306.40 642.27,304.78 643.57,306.93 644.87,310.36 646.17,306.60 647.47,310.79 648.77,307.00 650.07,307.19 651.37,304.39 652.66,305.40 653.96,304.29 655.26,302.46 656.56,308.45 657.86,303.10 659.16,303.81 660.46,305.22 661.76,306.27 663.05,308.38 664.35,310.26 665.65,308.66 666.95,313.50 668.25,308.99 669.55,310.37 670.85,314.43 672.15,310.43 673.44,310.02 674.74,308.94 676.04,313.28 677.34,309.84 678.64,308.78 679.94,309.43 681.24,308.50 682.54,310.91 683.83,314.56 685.13,310.54 686.43,310.12 687.73,314.55 689.03,309.72 690.33,309.55 691.63,309.67 692.93,309.14 694.22,310.56 695.52,308.66 696.82,308.11 698.12,312.98 699.42,309.26 700.72,308.74 702.02,315.31 703.32,310.96 704.61,309.99 705.91,309.69 707.21,310.14 708.51,313.11 709.81,314.40 711.11,307.91 712.41,305.73 713.71,307.49 715.00,306.14 716.30,305.11 717.60,304.95 718.90,304.43 720.20,303.60 721.50,301.87 722.80,304.83 724.10,307.63 725.39,303.42 726.69,306.00 727.99,304.16 729.29,303.96 730.59,303.99 731.89,304.49 733.19,308.66 734.49,303.10 735.78,304.42 737.08,305.19 738.38,309.96 739.68,307.19 740.98,305.71 742.28,311.40 743.58,308.63 744.88,308.43 746.17,310.79 747.47,313.86 748.77,306.84 750.07,307.98 751.37,306.51 752.67,307.44 753.97,307.22 755.27,304.10 756.56,303.86 757.86,306.10 759.16,308.69 760.46,304.13 761.76,306.10 763.06,304.47 764.36,304.87 765.66,303.22 766.95,308.44 768.25,303.96 769.55,302.71 770.85,304.11 772.15,304.44 773.45,302.35 774.75,302.32 776.05,304.13 777.34,305.77 778.64,303.84 779.94,304.84 781.24,306.88 782.54,304.73 783.84,310.59 785.14,309.60 786.44,308.60 787.73,313.76 789.03,307.62 790.33,310.04 791.63,308.85 792.93,308.49 794.23,309.26 795.53,306.06 796.83,306.83 798.12,307.60 799.42,306.80 800.72,307.02 802.02,307.94 803.32,305.99 804.62,306.80 805.92,304.50 807.22,304.89 808.51,306.34 809.81,304.66 811.11,306.40 812.41,306.11 813.71,306.90 815.01,307.12 816.31,310.26 817.61,305.97 818.90,306.51 820.20,304.70 821.50,309.22 822.80,304.89 824.10,306.60 825.40,301.55 826.70,306.61 828.00,308.31 829.29,303.83 830.59,301.77 831.89,304.65 833.19,302.52 834.49,304.30 835.79,304.53 837.09,303.49 838.39,304.35 839.68,304.39 840.98,305.79 842.28,306.72 843.58,305.96 844.88,306.37 846.18,305.18 847.48,305.79 848.78,305.78 850.07,310.58 851.37,304.55 852.67,306.93 853.97,306.37 855.27,305.45 856.57,305.37 857.87,305.80 859.17,307.42 860.46,307.08 861.76,312.62 863.06,306.79 864.36,306.62 865.66,307.14 866.96,307.76 868.26,308.16 869.56,311.01 870.85,313.29 872.15,308.30 873.45,309.22 874.75,308.39 876.05,307.26 877.35,308.34 878.65,310.03 879.95,310.78 881.24,306.43 882.54,308.00 883.84,304.94 885.14,308.48 886.44,304.91 887.74,303.15 889.04,304.61 890.34,303.97 891.63,306.64 892.93,305.04 894.23,303.95 895.53,303.62 896.83,303.36 898.13,304.99 899.43,301.96 900.73,305.73 902.02,303.87 903.32,301.52 904.62,307.57 905.92,307.80 907.22,305.52 908.52,302.75 909.82,300.92 911.12,305.72 912.41,302.04 913.71,304.93 915.01,302.92 916.31,308.25 917.61,305.64 918.91,310.49 920.21,310.61 921.51,305.91 922.80,307.31 924.10,307.45 925.40,307.32 926.70,309.71 928.00,309.08" fill="none" stroke="#f5df55" stroke-width="1.15"  stroke-linejoin="miter" stroke-miterlimit="3"/>
<polyline points="673.80,402.20 674.80,372.00 675.70,357.00 676.60,355.00 677.50,358.00 678.50,356.00 679.30,352.80 680.00,370.00 680.80,402.20" fill="none" stroke="#94b7f9" stroke-width="1"  stroke-linejoin="miter" stroke-miterlimit="3"/>
<line x1="384.50" y1="402.20" x2="928.00" y2="402.20" stroke="#8fb3c7" stroke-width="1.0"/>
<line x1="607.90" y1="402.00" x2="607.90" y2="390.00" stroke="#f5df55" stroke-width="1"/>
<rect x="334.00" y="434.80" width="14" height="4" rx="2" fill="#85bd72"/>
<text x="356.55" y="440.90" font-size="12.5" fill="#ccccdc" textLength="90.69" lengthAdjust="spacingAndGlyphs" stroke="#ccccdc" stroke-width="0.36">session-service</text>
<rect x="457.40" y="434.80" width="14" height="4" rx="2" fill="#f5df55"/>
<text x="479.95" y="440.90" font-size="12.5" fill="#ccccdc" textLength="81.36" lengthAdjust="spacingAndGlyphs" stroke="#ccccdc" stroke-width="0.36">cache-service</text>
<rect x="571.80" y="434.80" width="14" height="4" rx="2" fill="#94b7f9"/>
<text x="594.34" y="440.90" font-size="12.5" fill="#ccccdc" textLength="92.30" lengthAdjust="spacingAndGlyphs" stroke="#ccccdc" stroke-width="0.36">eviction-service</text>
<line x1="381.50" y1="529.30" x2="927.70" y2="529.30" stroke="rgba(204,210,210,0.11)" stroke-width="1"/>
<line x1="381.50" y1="568.30" x2="927.70" y2="568.30" stroke="rgba(204,210,210,0.11)" stroke-width="1"/>
<line x1="381.50" y1="607.30" x2="927.70" y2="607.30" stroke="rgba(204,210,210,0.11)" stroke-width="1"/>
<line x1="395.60" y1="513.30" x2="395.60" y2="610.50" stroke="rgba(204,210,210,0.11)" stroke-width="1"/>
<line x1="463.40" y1="513.30" x2="463.40" y2="610.50" stroke="rgba(204,210,210,0.11)" stroke-width="1"/>
<line x1="531.20" y1="513.30" x2="531.20" y2="610.50" stroke="rgba(204,210,210,0.11)" stroke-width="1"/>
<line x1="599.00" y1="513.30" x2="599.00" y2="610.50" stroke="rgba(204,210,210,0.11)" stroke-width="1"/>
<line x1="666.80" y1="513.30" x2="666.80" y2="610.50" stroke="rgba(204,210,210,0.11)" stroke-width="1"/>
<line x1="734.60" y1="513.30" x2="734.60" y2="610.50" stroke="rgba(204,210,210,0.11)" stroke-width="1"/>
<line x1="802.40" y1="513.30" x2="802.40" y2="610.50" stroke="rgba(204,210,210,0.11)" stroke-width="1"/>
<line x1="870.20" y1="513.30" x2="870.20" y2="610.50" stroke="rgba(204,210,210,0.11)" stroke-width="1"/>
<text x="329.51" y="533.00" font-size="12.5" fill="#ccccdc" textLength="46.59" lengthAdjust="spacingAndGlyphs" stroke="#ccccdc" stroke-width="0.36">1.67 min</text>
<text x="352.18" y="572.00" font-size="12.5" fill="#ccccdc" textLength="23.62" lengthAdjust="spacingAndGlyphs" stroke="#ccccdc" stroke-width="0.36">50 s</text>
<text x="359.18" y="611.00" font-size="12.5" fill="#ccccdc" textLength="16.67" lengthAdjust="spacingAndGlyphs" stroke="#ccccdc" stroke-width="0.36">0 s</text>
<text x="379.28" y="626.00" font-size="12.5" fill="#ccccdc" textLength="32.16" lengthAdjust="spacingAndGlyphs" stroke="#ccccdc" stroke-width="0.36">12:00</text>
<text x="447.08" y="626.00" font-size="12.5" fill="#ccccdc" textLength="32.16" lengthAdjust="spacingAndGlyphs" stroke="#ccccdc" stroke-width="0.36">12:30</text>
<text x="514.88" y="626.00" font-size="12.5" fill="#ccccdc" textLength="32.16" lengthAdjust="spacingAndGlyphs" stroke="#ccccdc" stroke-width="0.36">13:00</text>
<text x="582.68" y="626.00" font-size="12.5" fill="#ccccdc" textLength="32.16" lengthAdjust="spacingAndGlyphs" stroke="#ccccdc" stroke-width="0.36">13:30</text>
<text x="650.48" y="626.00" font-size="12.5" fill="#ccccdc" textLength="32.16" lengthAdjust="spacingAndGlyphs" stroke="#ccccdc" stroke-width="0.36">14:00</text>
<text x="718.28" y="626.00" font-size="12.5" fill="#ccccdc" textLength="32.16" lengthAdjust="spacingAndGlyphs" stroke="#ccccdc" stroke-width="0.36">14:30</text>
<text x="786.08" y="626.00" font-size="12.5" fill="#ccccdc" textLength="32.16" lengthAdjust="spacingAndGlyphs" stroke="#ccccdc" stroke-width="0.36">15:00</text>
<text x="853.88" y="626.00" font-size="12.5" fill="#ccccdc" textLength="32.16" lengthAdjust="spacingAndGlyphs" stroke="#ccccdc" stroke-width="0.36">15:30</text>
<polyline points="386.00,607.30 387.30,607.30 387.90,605.00 389.10,605.00 389.70,607.30 389.70,607.30 390.30,600.00 391.50,600.00 392.10,607.30 405.60,607.30 406.20,598.00 407.40,598.00 408.00,607.30 410.80,607.30 411.20,573.00 412.00,573.00 412.40,607.30 437.85,607.30 438.23,530.00 438.98,530.00 439.35,607.30 448.20,607.30 448.80,604.00 450.00,604.00 450.60,607.30 466.00,607.30 466.60,605.00 467.80,605.00 468.40,607.30 483.50,607.30 484.10,598.00 485.30,598.00 485.90,607.30 491.85,607.30 492.23,530.00 492.98,530.00 493.35,607.30 499.80,607.30 500.40,601.00 501.60,601.00 502.20,607.30 502.60,607.30 503.20,600.00 504.40,600.00 505.00,607.30 580.65,607.30 581.02,530.00 581.77,530.00 582.15,607.30 603.90,607.30 604.30,546.00 605.10,546.00 605.50,607.30 613.45,607.30 613.83,530.00 614.58,530.00 614.95,607.30 618.60,607.30 619.20,598.00 620.40,598.00 621.00,607.30 623.40,607.30 624.00,600.00 625.20,600.00 625.80,607.30 627.80,607.30 628.20,581.00 629.00,581.00 629.40,607.30 640.10,607.30 640.70,604.00 641.90,604.00 642.50,607.30 647.20,607.30 647.80,604.00 649.00,604.00 649.60,607.30 650.80,607.30 651.20,548.00 652.00,548.00 652.40,607.30 672.10,607.30 672.50,570.00 673.30,570.00 673.70,607.30 688.00,607.30 688.40,590.00 689.20,590.00 689.60,607.30 694.80,607.30 695.40,597.00 696.60,597.00 697.20,607.30 704.30,607.30 704.90,597.00 706.10,597.00 706.70,607.30 725.80,607.30 726.20,559.00 727.00,559.00 727.40,607.30 731.80,607.30 732.40,603.00 733.60,603.00 734.20,607.30 740.10,607.30 740.50,550.00 741.30,550.00 741.70,607.30 746.40,607.30 746.80,551.00 747.60,551.00 748.00,607.30 758.30,607.30 758.90,598.00 760.10,598.00 760.70,607.30 770.80,607.30 771.40,605.00 772.60,605.00 773.20,607.30 798.15,607.30 798.52,530.00 799.27,530.00 799.65,607.30 808.80,607.30 809.40,598.00 810.60,598.00 811.20,607.30 823.90,607.30 824.50,598.00 825.70,598.00 826.30,607.30 829.15,607.30 829.52,530.00 830.27,530.00 830.65,607.30 837.80,607.30 838.20,563.00 839.00,563.00 839.40,607.30 841.80,607.30 842.20,589.00 843.00,589.00 843.40,607.30 858.80,607.30 859.40,605.00 860.60,605.00 861.20,607.30 885.50,607.30 885.90,542.00 886.70,542.00 887.10,607.30 900.75,607.30 901.12,530.00 901.88,530.00 902.25,607.30 910.80,607.30 911.40,606.00 912.60,606.00 913.20,607.30 922.95,607.30 923.33,530.00 924.08,530.00 924.45,607.30 926.25,607.30 926.62,530.00 927.38,530.00 927.75,607.30 927.70,607.30" fill="none" stroke="#f19d49" stroke-width="1"  stroke-linejoin="bevel"/>
<polyline points="386.00,535.00 388.00,548.00 390.00,566.00 392.00,560.00 394.00,532.85 395.15,566.98 396.31,560.40 397.46,533.65 398.62,540.49 399.77,529.57 400.93,534.39 402.08,591.06 403.24,527.97 404.39,538.11 405.55,552.02 406.70,540.97 407.86,537.34 409.01,555.85 410.16,563.22 411.32,536.71 412.47,536.08 413.63,588.37 414.78,528.75 415.94,585.73 417.09,532.62 418.25,529.12 419.40,589.48 420.56,537.92 421.71,575.07 422.87,537.57 424.02,537.68 425.18,535.13 426.33,584.67 427.48,532.43 428.64,531.78 429.79,529.05 430.95,534.50 432.10,584.32 433.26,531.45 434.41,533.78 435.57,579.31 436.72,537.02 437.88,540.75 439.03,527.04 440.19,588.47 441.34,535.00 442.49,586.72 443.65,536.38 444.80,563.31 445.96,535.36 447.11,531.29 448.27,528.45 449.42,527.92 450.58,564.37 451.73,527.51 452.89,534.28 454.04,536.21 455.20,591.85 456.35,535.27 457.51,539.36 458.66,533.87 459.81,578.41 460.97,561.15 462.12,527.97 463.28,538.27 464.43,582.03 465.59,589.95 466.74,531.06 467.90,532.87 469.05,529.39 470.21,551.39 471.36,540.77 472.52,579.95 473.67,587.10 474.82,533.71 475.98,540.34 477.13,539.59 478.29,577.04 479.44,537.82 480.60,533.78 481.75,585.48 482.91,581.86 484.06,537.09 485.22,532.35 486.37,528.76 487.53,537.02 488.68,587.01 489.84,540.38 490.99,532.90 492.14,536.56 493.30,537.52 494.45,579.33 495.61,529.61 496.76,556.80 497.92,557.98 499.07,528.77 500.23,534.54 501.38,590.43 502.54,529.33 503.69,529.58 504.85,588.42 506.00,588.60 507.00,530.00 508.50,560.00 510.00,607.00 512.00,607.30" fill="none" stroke="#94b7f9" stroke-width="1"  stroke-linejoin="bevel"/>
<polyline points="611.90,607.00 613.00,560.00 614.50,532.00 616.00,536.95 617.15,539.23 618.30,555.20 619.45,539.10 620.60,532.57 621.75,587.96 622.90,581.54 624.05,535.47 625.20,537.44 626.35,530.43 627.50,590.61 628.65,538.45 629.80,538.24 630.95,544.28 632.10,550.82 633.25,535.33 634.40,531.53 635.55,587.79 636.70,585.36 637.85,529.65 639.00,535.63 640.15,547.62 641.30,536.21 642.45,532.88 643.60,570.66 644.75,537.64 645.90,533.27 647.05,535.70 648.21,527.28 649.36,585.18 650.51,590.26 651.66,530.16 652.81,556.05 653.96,536.86 655.11,538.44 656.26,581.31 657.41,583.40 658.56,530.19 659.71,539.81 660.86,580.42 662.01,537.04 663.16,539.47 664.31,573.96 665.46,571.70 666.61,535.48 667.76,538.48 668.91,530.67 670.06,533.74 671.21,586.61 672.36,589.55 673.51,540.85 674.66,527.09 675.81,531.38 676.96,552.31 678.11,534.75 679.26,586.68 680.41,537.39 681.56,533.47 682.71,545.16 683.86,529.88 685.01,531.69 686.16,561.52 687.31,578.78 688.46,534.21 689.61,540.23 690.76,549.59 691.91,535.37 693.06,558.93 694.21,533.54 695.36,533.12 696.51,571.74 697.66,571.69 698.81,530.81 699.96,529.64 701.11,589.35 702.26,536.86 703.41,527.27 704.56,534.02 705.71,527.55 706.86,584.29 708.01,591.87 709.16,529.07 710.32,540.62 711.47,590.52 712.62,529.33 713.77,534.99 714.92,578.69 716.07,580.63 717.22,539.36 718.37,530.42 719.52,576.09 720.67,578.13 721.82,527.25 722.97,535.15 724.12,528.13 725.27,539.60 726.42,584.96 727.57,535.49 728.72,535.68 729.87,571.90 731.02,558.82 732.17,531.94 733.32,555.23 734.47,527.99 735.62,527.95 736.77,534.16 737.92,536.49 739.07,582.93 740.22,527.52 741.37,589.05 742.52,583.59 743.67,528.46 744.82,583.72 745.97,529.71 747.12,540.36 748.27,532.93 749.42,560.34 750.57,537.19 751.72,586.80 752.87,580.44 754.02,532.16 755.17,533.70 756.32,539.10 757.47,577.66 758.62,571.99 759.77,536.53 760.92,590.72 762.07,591.58 763.22,529.94 764.37,533.50 765.52,582.93 766.67,530.71 767.82,527.35 768.97,559.04 770.12,578.27 771.27,534.01 772.43,532.78 773.58,550.21 774.73,533.30 775.88,537.74 777.03,540.37 778.18,539.74 779.33,580.50 780.48,536.41 781.63,539.13 782.78,578.38 783.93,583.92 785.08,537.57 786.23,540.78 787.38,560.32 788.53,534.32 789.68,539.53 790.83,580.26 791.98,587.27 793.13,535.97 794.28,537.79 795.43,561.32 796.58,538.58 797.73,530.11 798.88,585.53 800.03,584.42 801.18,538.05 802.33,589.24 803.48,528.95 804.63,530.07 805.78,529.22 806.93,578.05 808.08,539.13 809.23,531.15 810.38,538.65 811.53,581.18 812.68,588.28 813.83,537.71 814.98,536.42 816.13,527.38 817.28,539.83 818.43,584.46 819.58,534.88 820.73,533.27 821.88,552.77 823.03,536.18 824.18,537.28 825.33,578.20 826.48,559.97 827.63,531.66 828.78,538.88 829.93,537.44 831.08,530.48 832.23,589.64 833.38,528.46 834.54,535.64 835.69,579.87 836.84,536.98 837.99,530.05 839.14,536.61 840.29,531.69 841.44,580.71 842.59,579.97 843.74,530.67 844.89,588.59 846.04,586.43 847.19,527.30 848.34,537.15 849.49,567.20 850.64,568.44 851.79,532.23 852.94,535.91 854.09,583.63 855.24,535.90 856.39,533.40 857.54,584.15 858.69,581.25 859.84,536.00 860.99,533.37 862.14,530.10 863.29,535.22 864.44,563.62 865.59,558.86 866.74,538.19 867.89,562.48 869.04,533.39 870.19,586.74 871.34,529.14 872.49,534.71 873.64,529.33 874.79,536.01 875.94,579.74 877.09,587.81 878.24,534.54 879.39,560.49 880.54,528.35 881.69,529.85 882.84,578.21 883.99,572.46 885.14,527.13 886.29,531.24 887.44,531.45 888.59,539.79 889.74,548.43 890.89,533.98 892.04,539.48 893.19,578.53 894.34,586.97 895.49,540.51 896.65,537.87 897.80,537.08 898.95,534.43 900.10,583.20 901.25,536.18 902.40,532.45 903.55,582.02 904.70,533.81 905.85,558.73 907.00,532.47 908.15,530.78 909.30,543.64 910.45,552.69 911.60,532.95 912.75,536.67 913.90,535.79 915.05,533.63 916.20,552.43 917.35,543.61 918.50,531.26 919.65,531.62 920.80,529.61 921.95,580.80 923.10,530.05 924.25,547.38 925.40,537.83 926.55,538.90 927.70,540.50" fill="none" stroke="#94b7f9" stroke-width="1"  stroke-linejoin="bevel"/>
<polyline points="675.50,607.30 677.00,570.00 677.90,547.50 679.00,575.00 681.50,607.30" fill="none" stroke="#e05660" stroke-width="1"  stroke-linejoin="miter" stroke-miterlimit="3"/>
<line x1="386.00" y1="607.30" x2="927.70" y2="607.30" stroke="#6592eb" stroke-width="1.0"/>
<rect x="333.90" y="639.30" width="14" height="4" rx="2" fill="#85bd72"/>
<text x="356.45" y="645.40" font-size="12.5" fill="#ccccdc" textLength="90.69" lengthAdjust="spacingAndGlyphs" stroke="#ccccdc" stroke-width="0.36">session-service</text>
<rect x="457.10" y="639.30" width="14" height="4" rx="2" fill="#f5df55"/>
<text x="479.65" y="645.40" font-size="12.5" fill="#ccccdc" textLength="90.48" lengthAdjust="spacingAndGlyphs" stroke="#ccccdc" stroke-width="0.36">session-service</text>
<rect x="581.10" y="639.30" width="14" height="4" rx="2" fill="#94b7f9"/>
<text x="603.65" y="645.40" font-size="12.5" fill="#ccccdc" textLength="81.36" lengthAdjust="spacingAndGlyphs" stroke="#ccccdc" stroke-width="0.36">cache-service</text>
<rect x="695.20" y="639.30" width="14" height="4" rx="2" fill="#f19d49"/>
<text x="717.75" y="645.40" font-size="12.5" fill="#ccccdc" textLength="81.56" lengthAdjust="spacingAndGlyphs" stroke="#ccccdc" stroke-width="0.36">cache-service</text>
<rect x="810.10" y="639.30" width="14" height="4" rx="2" fill="#e05660"/>
<text x="832.64" y="645.40" font-size="12.5" fill="#ccccdc" textLength="92.30" lengthAdjust="spacingAndGlyphs" stroke="#ccccdc" stroke-width="0.36">eviction-service</text>
<rect x="333.90" y="662.30" width="14" height="4" rx="2" fill="#6592eb"/>
<text x="356.44" y="668.40" font-size="12.5" fill="#ccccdc" textLength="92.30" lengthAdjust="spacingAndGlyphs" stroke="#ccccdc" stroke-width="0.36">eviction-service</text>
<line x1="980.60" y1="505.30" x2="980.60" y2="598.10" stroke="rgba(204,210,210,0.11)" stroke-width="1"/>
<line x1="1054.28" y1="505.30" x2="1054.28" y2="598.10" stroke="rgba(204,210,210,0.11)" stroke-width="1"/>
<line x1="1127.96" y1="505.30" x2="1127.96" y2="598.10" stroke="rgba(204,210,210,0.11)" stroke-width="1"/>
<line x1="1201.64" y1="505.30" x2="1201.64" y2="598.10" stroke="rgba(204,210,210,0.11)" stroke-width="1"/>
<line x1="1275.32" y1="505.30" x2="1275.32" y2="598.10" stroke="rgba(204,210,210,0.11)" stroke-width="1"/>
<line x1="1349.00" y1="505.30" x2="1349.00" y2="598.10" stroke="rgba(204,210,210,0.11)" stroke-width="1"/>
<line x1="1422.68" y1="505.30" x2="1422.68" y2="598.10" stroke="rgba(204,210,210,0.11)" stroke-width="1"/>
<line x1="1496.36" y1="505.30" x2="1496.36" y2="598.10" stroke="rgba(204,210,210,0.11)" stroke-width="1"/>
<text x="964.28" y="612.60" font-size="12.5" fill="#ccccdc" textLength="32.16" lengthAdjust="spacingAndGlyphs" stroke="#ccccdc" stroke-width="0.36">12:00</text>
<text x="1037.96" y="612.60" font-size="12.5" fill="#ccccdc" textLength="32.16" lengthAdjust="spacingAndGlyphs" stroke="#ccccdc" stroke-width="0.36">12:30</text>
<text x="1111.64" y="612.60" font-size="12.5" fill="#ccccdc" textLength="32.16" lengthAdjust="spacingAndGlyphs" stroke="#ccccdc" stroke-width="0.36">13:00</text>
<text x="1185.32" y="612.60" font-size="12.5" fill="#ccccdc" textLength="32.16" lengthAdjust="spacingAndGlyphs" stroke="#ccccdc" stroke-width="0.36">13:30</text>
<text x="1259.00" y="612.60" font-size="12.5" fill="#ccccdc" textLength="32.16" lengthAdjust="spacingAndGlyphs" stroke="#ccccdc" stroke-width="0.36">14:00</text>
<text x="1332.68" y="612.60" font-size="12.5" fill="#ccccdc" textLength="32.16" lengthAdjust="spacingAndGlyphs" stroke="#ccccdc" stroke-width="0.36">14:30</text>
<text x="1406.36" y="612.60" font-size="12.5" fill="#ccccdc" textLength="32.16" lengthAdjust="spacingAndGlyphs" stroke="#ccccdc" stroke-width="0.36">15:00</text>
<text x="1480.04" y="612.60" font-size="12.5" fill="#ccccdc" textLength="32.16" lengthAdjust="spacingAndGlyphs" stroke="#ccccdc" stroke-width="0.36">15:30</text>
<clipPath id="mclip"><rect x="953" y="615" width="624" height="60.2"/></clipPath>
<g clip-path="url(#mclip)">
<rect x="966.10" y="627.40" width="14" height="4" rx="2" fill="#85bd72"/>
<text x="988.38" y="633.50" font-size="12.5" fill="#a3a4ad" textLength="248.71" lengthAdjust="spacingAndGlyphs" stroke="#a3a4ad" stroke-width="0.36">mc785-0.us-east4-mz.gcp.cloud.rlrcp.com</text>
<rect x="1246.30" y="627.40" width="14" height="4" rx="2" fill="#f5df55"/>
<text x="1268.59" y="633.50" font-size="12.5" fill="#a3a4ad" textLength="259.07" lengthAdjust="spacingAndGlyphs" stroke="#a3a4ad" stroke-width="0.36">mc785-1.us-central1-mz.gcp.cloud.rlrcp.com</text>
<rect x="966.10" y="650.90" width="14" height="4" rx="2" fill="#94b7f9"/>
<text x="988.38" y="657.00" font-size="12.5" fill="#a3a4ad" textLength="248.71" lengthAdjust="spacingAndGlyphs" stroke="#a3a4ad" stroke-width="0.36">mc785-0.us-east4-mz.gcp.cloud.rlrcp.com</text>
<rect x="1246.30" y="650.90" width="14" height="4" rx="2" fill="#f19d49"/>
<text x="1268.59" y="657.00" font-size="12.5" fill="#a3a4ad" textLength="259.07" lengthAdjust="spacingAndGlyphs" stroke="#a3a4ad" stroke-width="0.36">mc785-1.us-central1-mz.gcp.cloud.rlrcp.com</text>
<rect x="966.10" y="674.40" width="14" height="4" rx="2" fill="#e05660"/>
<text x="988.39" y="680.50" font-size="12.5" fill="#a3a4ad" textLength="259.07" lengthAdjust="spacingAndGlyphs" stroke="#a3a4ad" stroke-width="0.36">mc785-1.us-central1-mz.gcp.cloud.rlrcp.com</text>
<rect x="1257.20" y="674.40" width="14" height="4" rx="2" fill="#6592eb"/>
<text x="1279.48" y="680.50" font-size="12.5" fill="#a3a4ad" textLength="248.71" lengthAdjust="spacingAndGlyphs" stroke="#a3a4ad" stroke-width="0.36">mc785-0.us-east4-mz.gcp.cloud.rlrcp.com</text>
</g>
</g></svg>
</body></html>
